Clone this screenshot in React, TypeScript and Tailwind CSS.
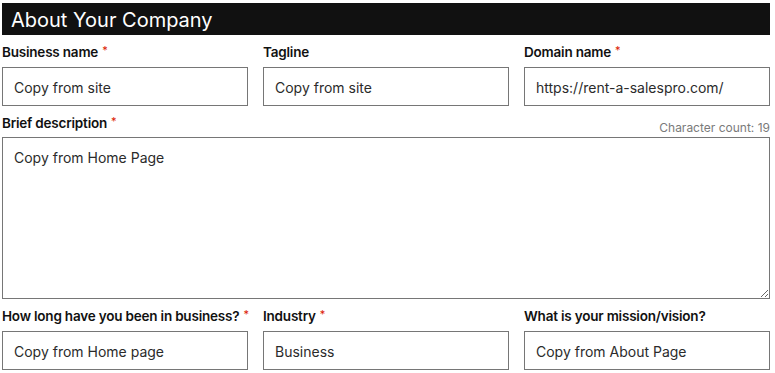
const font = { fontFamily: "Inter, 'Noto Sans', sans-serif" };

function Label({ text, required }: { text: string; required?: boolean }) {
  return (
    <label className="flex h-5 items-center whitespace-nowrap text-[13.5px] font-semibold leading-5 tracking-[-0.2px] text-[#111]">
      {text}
      {required && (
        <span className="ml-1 -mt-1 text-[11px] font-normal text-[#db1802]">*</span>
      )}
    </label>
  );
}

function Field({
  label,
  value,
  required,
}: {
  label: string;
  value: string;
  required?: boolean;
}) {
  return (
    <div className="flex flex-col">
      <Label text={label} required={required} />
      <input
        readOnly
        defaultValue={value}
        className="mt-[5px] h-[39px] w-full border border-[#767676] bg-white px-[11px] pt-[1px] text-[14px] text-[#2b2b2b] outline-none"
      />
    </div>
  );
}

export default function App() {
  return (
    <div style={font} className="h-[373px] w-[775px] bg-white px-[2px] pt-[3px]">
      <div className="flex h-8 w-[768px] items-center bg-[#111111] px-[9px] pt-[1px]">
        <h2 className="text-[20px] font-normal text-white">About Your Company</h2>
      </div>

      <div className="mt-[7px] grid w-[768px] grid-cols-[246px_246px_246px] gap-x-[15px]">
        <Field label="Business name" value="Copy from site" required />
        <Field label="Tagline" value="Copy from site" />
        <Field label="Domain name" value="https://rent-a-salespro.com/" required />
      </div>

      <div className="mt-[7px] w-[768px]">
        <div className="flex items-end justify-between">
          <Label text="Brief description" required />
          <span className="translate-y-[3px] text-[12px] leading-4 text-[#7a7a7a]">
            Character count: 19
          </span>
        </div>
        <textarea
          readOnly
          defaultValue="Copy from Home Page"
          className="mt-[4px] block h-[162px] w-full resize border border-[#767676] bg-white px-[11px] py-[10px] text-[14px] leading-5 text-[#2b2b2b] outline-none"
        />
      </div>

      <div className="mt-[7px] grid w-[768px] grid-cols-[246px_246px_246px] gap-x-[15px]">
        <Field label="How long have you been in business?" value="Copy from Home page" required />
        <Field label="Industry" value="Business" required />
        <Field label="What is your mission/vision?" value="Copy from About Page" />
      </div>
    </div>
  );
}
